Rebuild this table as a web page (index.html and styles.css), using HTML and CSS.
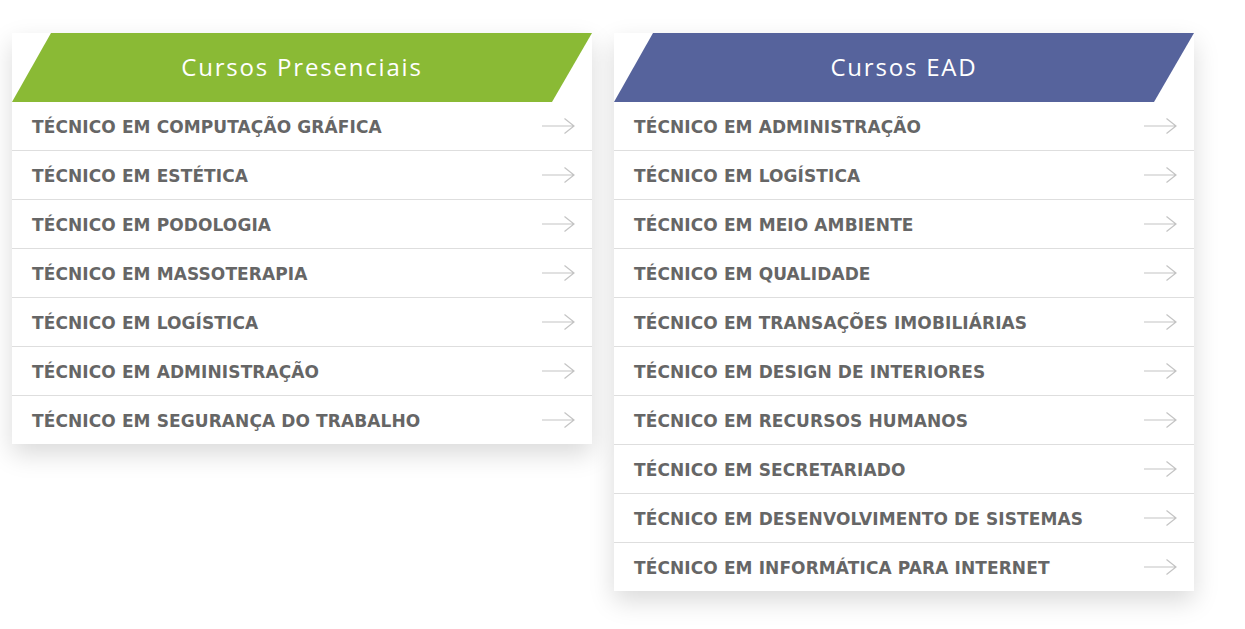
FILE: index.html
```html
<!DOCTYPE html>
<html lang="pt-BR">
<head>
<meta charset="utf-8">
<title>Cursos</title>
<link rel="stylesheet" href="styles.css">
</head>
<body>
<div class="page">
  <section class="card">
    <div class="head head-green"><span>Cursos Presenciais</span></div>
    <ul class="list">
      <li class="row"><span>Técnico em Computação Gráfica</span><svg class="arr" viewBox="0 0 33 18"><path d="M0 9H32M22.5 1.5L32 9L22.5 16.5"/></svg></li>
      <li class="row"><span>Técnico em Estética</span><svg class="arr" viewBox="0 0 33 18"><path d="M0 9H32M22.5 1.5L32 9L22.5 16.5"/></svg></li>
      <li class="row"><span>Técnico em Podologia</span><svg class="arr" viewBox="0 0 33 18"><path d="M0 9H32M22.5 1.5L32 9L22.5 16.5"/></svg></li>
      <li class="row"><span>Técnico em Massoterapia</span><svg class="arr" viewBox="0 0 33 18"><path d="M0 9H32M22.5 1.5L32 9L22.5 16.5"/></svg></li>
      <li class="row"><span>Técnico em Logística</span><svg class="arr" viewBox="0 0 33 18"><path d="M0 9H32M22.5 1.5L32 9L22.5 16.5"/></svg></li>
      <li class="row"><span>Técnico em Administração</span><svg class="arr" viewBox="0 0 33 18"><path d="M0 9H32M22.5 1.5L32 9L22.5 16.5"/></svg></li>
      <li class="row"><span>Técnico em Segurança do Trabalho</span><svg class="arr" viewBox="0 0 33 18"><path d="M0 9H32M22.5 1.5L32 9L22.5 16.5"/></svg></li>
    </ul>
  </section>
  <section class="card">
    <div class="head head-blue"><span>Cursos EAD</span></div>
    <ul class="list">
      <li class="row"><span>Técnico em Administração</span><svg class="arr" viewBox="0 0 33 18"><path d="M0 9H32M22.5 1.5L32 9L22.5 16.5"/></svg></li>
      <li class="row"><span>Técnico em Logística</span><svg class="arr" viewBox="0 0 33 18"><path d="M0 9H32M22.5 1.5L32 9L22.5 16.5"/></svg></li>
      <li class="row"><span>Técnico em Meio Ambiente</span><svg class="arr" viewBox="0 0 33 18"><path d="M0 9H32M22.5 1.5L32 9L22.5 16.5"/></svg></li>
      <li class="row"><span>Técnico em Qualidade</span><svg class="arr" viewBox="0 0 33 18"><path d="M0 9H32M22.5 1.5L32 9L22.5 16.5"/></svg></li>
      <li class="row"><span>Técnico em Transações Imobiliárias</span><svg class="arr" viewBox="0 0 33 18"><path d="M0 9H32M22.5 1.5L32 9L22.5 16.5"/></svg></li>
      <li class="row"><span>Técnico em Design de Interiores</span><svg class="arr" viewBox="0 0 33 18"><path d="M0 9H32M22.5 1.5L32 9L22.5 16.5"/></svg></li>
      <li class="row"><span>Técnico em Recursos Humanos</span><svg class="arr" viewBox="0 0 33 18"><path d="M0 9H32M22.5 1.5L32 9L22.5 16.5"/></svg></li>
      <li class="row"><span>Técnico em Secretariado</span><svg class="arr" viewBox="0 0 33 18"><path d="M0 9H32M22.5 1.5L32 9L22.5 16.5"/></svg></li>
      <li class="row"><span>Técnico em Desenvolvimento de Sistemas</span><svg class="arr" viewBox="0 0 33 18"><path d="M0 9H32M22.5 1.5L32 9L22.5 16.5"/></svg></li>
      <li class="row"><span>Técnico em Informática para Internet</span><svg class="arr" viewBox="0 0 33 18"><path d="M0 9H32M22.5 1.5L32 9L22.5 16.5"/></svg></li>
    </ul>
  </section>
</div>
</body>
</html>
```
FILE: styles.css
```css
html, body {
  margin: 0;
  padding: 0;
  background: #fff;
}
body {
  font-family: "Open Sans", "Liberation Sans", sans-serif;
  min-height: 629px;
}
.page {
  display: flex;
  align-items: flex-start;
  gap: 22px;
  padding: 33px 0 38px 12px;
}
.card {
  width: 580px;
  background: #fff;
  box-shadow: 0 10px 24px rgba(0, 0, 0, 0.15);
}
.head {
  height: 69px;
  display: flex;
  align-items: center;
  justify-content: center;
  color: #fff;
  font-size: 24px;
  font-weight: 400;
  letter-spacing: 1.8px;
  clip-path: polygon(39px 0, 100% 0, calc(100% - 40px) 100%, 0 100%);
}
.head span {
  transform: translateY(-1px);
}
.head-green { background: #8aba35; }
.head-blue { background: #56639c; }
.list {
  list-style: none;
  margin: 0;
  padding: 0;
}
.row {
  height: 48px;
  display: flex;
  align-items: center;
  justify-content: space-between;
  padding: 0 17px 0 20px;
  border-bottom: 1px solid #dedede;
  color: #666;
  font-family: "DejaVu Sans", "Open Sans", sans-serif;
  font-size: 17px;
  font-weight: 700;
  letter-spacing: 0.1px;
  text-transform: uppercase;
}
.row span {
  transform: translateY(1px);
}
.row:last-child {
  border-bottom: 0;
}
.arr {
  width: 33px;
  height: 18px;
  fill: none;
  stroke: #c4c4c4;
  stroke-width: 1.2;
}
```
